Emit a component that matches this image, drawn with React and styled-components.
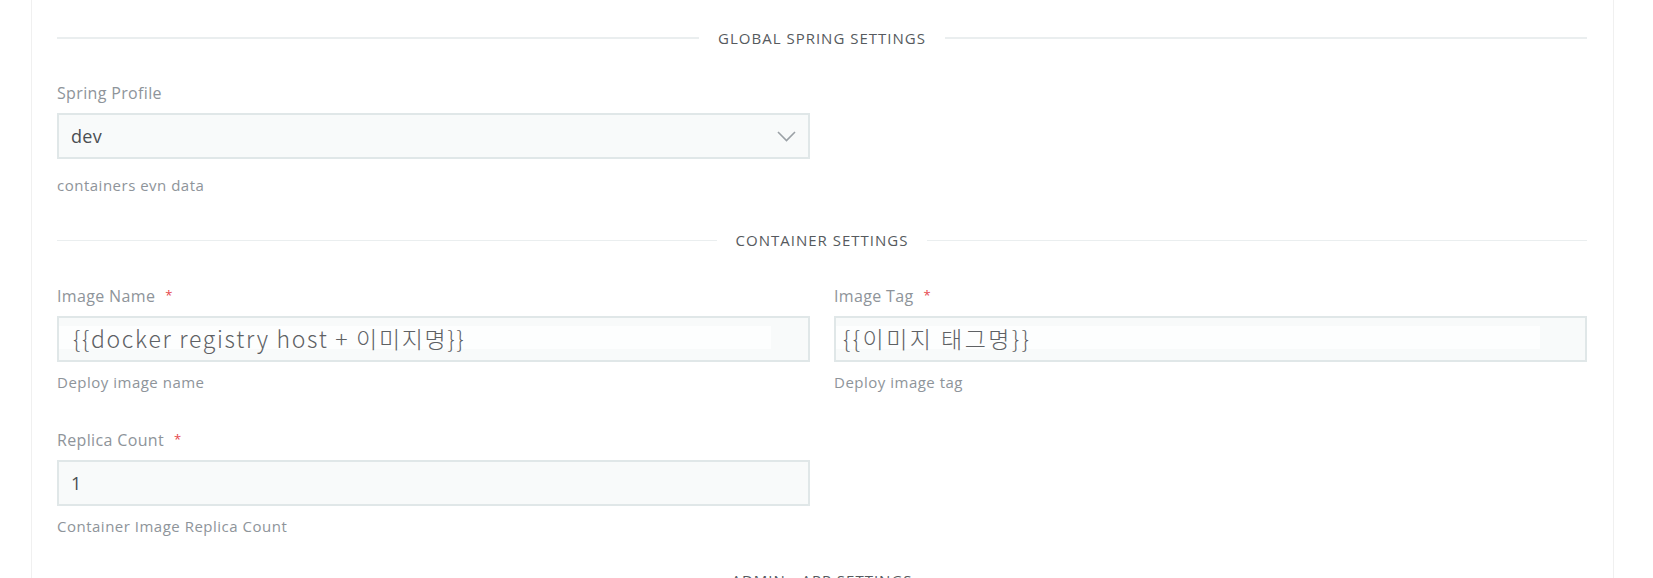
import React from 'react';
import styled, { createGlobalStyle } from 'styled-components';

const GlobalStyle = createGlobalStyle`
  body {
    margin: 0;
    background: #ffffff;
    font-family: 'Open Sans', 'Noto Sans', 'Noto Sans CJK KR', sans-serif;
  }
`;

const Page = styled.div`
  padding-left: 31px;
  height: 578px;
  overflow: hidden;
`;

const Card = styled.div`
  box-sizing: border-box;
  width: 1583px;
  min-height: 578px;
  padding: 28px 26px 0 25px;
  border-left: 1px solid #f0f0f0;
  border-right: 1px solid #f0f0f0;
  background: #fff;
`;

const SectionTitle = styled.div`
  display: flex;
  align-items: center;
  line-height: 20px;
  font-size: 15px;
  letter-spacing: 1px;
  color: #565a5e;
  margin-bottom: 35px;
  &::before,
  &::after {
    content: '';
    flex: 1;
    height: ${(p) => p.$line || 1}px;
    background: #eaeeef;
  }
  span {
    padding: 0 19px;
  }
`;

const FieldGrid = styled.div`
  display: grid;
  grid-template-columns: 1fr 1fr;
  column-gap: 24px;
  row-gap: 37px;
  margin-bottom: ${(p) => p.$after || 35}px;
`;

const Field = styled.div`
  grid-column: ${(p) => (p.$col === 2 ? '2' : '1')};
`;

const Label = styled.label`
  display: block;
  font-size: 16px;
  line-height: 20px;
  letter-spacing: 0.35px;
  color: #8e949a;
  margin-bottom: 10px;
`;

const Required = styled.span`
  display: inline-block;
  margin-left: 10px;
  color: #e5484d;
  font-size: 13px;
  vertical-align: 2px;
`;

const Control = styled.div`
  box-sizing: border-box;
  height: 46px;
  display: flex;
  align-items: center;
  padding: 0 12px;
  border: 2px solid #e0e7e8;
  background: #f8fafa;
  font-size: 18px;
  letter-spacing: 0.3px;
  color: #4a4e52;
`;

const Chevron = styled.svg`
  margin-left: auto;
  flex-shrink: 0;
`;

const Pasted = styled.span`
  display: block;
  box-sizing: border-box;
  align-self: flex-start;
  margin-top: 8px;
  height: 23px;
  margin-left: -12px;
  width: ${(p) => p.$width}px;
  padding-left: ${(p) => p.$pad}px;
  background: #fdfefe;
  font-family: 'Noto Sans CJK KR', 'Noto Sans', sans-serif;
  font-size: 23px;
  font-weight: 300;
  line-height: 25px;
  letter-spacing: ${(p) => p.$spacing}px;
  color: #5e6164;
  white-space: nowrap;
`;

const Helper = styled.div`
  margin-top: ${(p) => p.$gap || 10}px;
  font-size: 15px;
  line-height: 20px;
  letter-spacing: 0.5px;
  color: #8e949a;
`;

function FormField({ label, required, helper, helperGap, col, children }) {
  return (
    <Field $col={col}>
      <Label>
        {label}
        {required && <Required>*</Required>}
      </Label>
      {children}
      <Helper $gap={helperGap}>{helper}</Helper>
    </Field>
  );
}

export default function App() {
  return (
    <Page>
      <GlobalStyle />
      <Card>
        <SectionTitle $line={2}>
          <span>GLOBAL SPRING SETTINGS</span>
        </SectionTitle>
        <FieldGrid>
          <FormField label='Spring Profile' helper='containers evn data' helperGap={16}>
            <Control>
              dev
              <Chevron width='19' height='11' viewBox='0 0 19 11'>
                <polyline
                  points='1,1 9.5,9.5 18,1'
                  fill='none'
                  stroke='#9ba1a6'
                  strokeWidth='1.6'
                />
              </Chevron>
            </Control>
          </FormField>
        </FieldGrid>

        <SectionTitle>
          <span>CONTAINER SETTINGS</span>
        </SectionTitle>
        <FieldGrid $after={34}>
          <FormField label='Image Name' required helper='Deploy image name'>
            <Control>
              <Pasted $width={712} $pad={14} $spacing={1.7}>
                {'{{docker registry host + 이미지명}}'}
              </Pasted>
            </Control>
          </FormField>
          <FormField label='Image Tag' required helper='Deploy image tag' col={2}>
            <Control>
              <Pasted $width={704} $pad={7} $spacing={2.5}>
                {'{{이미지 태그명}}'}
              </Pasted>
            </Control>
          </FormField>
          <FormField label='Replica Count' required helper='Container Image Replica Count'>
            <Control>1</Control>
          </FormField>
        </FieldGrid>

        <SectionTitle>
          <span>ADMIN - APP SETTINGS</span>
        </SectionTitle>
      </Card>
    </Page>
  );
}
